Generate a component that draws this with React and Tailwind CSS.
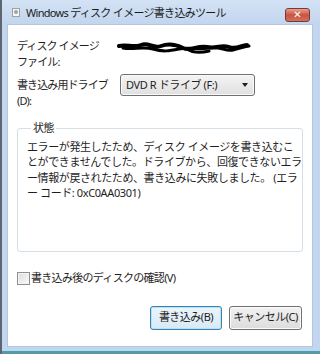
import React from 'react';

const jp = { fontFamily: '"Noto Sans", "Noto Sans CJK JP", sans-serif' };

function Scribble() {
  return (
    <svg width="134" height="14" viewBox="0 0 134 14" className="block">
      <path
        d="M2 5 C10 3 16 7 24 4 S36 8 44 5 S58 3 66 7 S80 4 90 6 S104 3 112 6 S124 4 130 4"
        fill="none" stroke="#000" strokeWidth="4" strokeLinecap="round" />
      <path
        d="M6 7 C16 9 26 5 36 8 S52 10 62 8 S80 9 92 7 S108 11 116 9 S126 6 132 5"
        fill="none" stroke="#000" strokeWidth="3" strokeLinecap="round" />
      <path d="M70 8 C76 12 84 12 92 10" fill="none" stroke="#000" strokeWidth="3" strokeLinecap="round" />
    </svg>
  );
}

function Btn({ children, primary }) {
  return (
    <button
      className={
        primary
          ? 'h-[24px] w-[72px] rounded-[3px] border border-[#3c7fb1] bg-gradient-to-b from-[#eaf6fd] to-[#d9e9f5] shadow-[inset_0_0_0_1px_#b7e2f8] text-[11px] tracking-[-0.5px] text-[#1e1e1e]'
          : 'h-[24px] w-[73px] rounded-[3px] border border-[#707070] bg-gradient-to-b from-[#f2f2f2] to-[#dcdcdc] shadow-[inset_0_0_0_1px_#fcfcfc] text-[11px] tracking-[-0.5px] text-[#1e1e1e]'
      }
      style={jp}
    >
      {children}
    </button>
  );
}

export default function App() {
  return (
    <div className="w-[320px] h-[354px] flex flex-col bg-[#c3d6ef] border-l-2 border-l-[#5d6670] overflow-hidden" style={jp}>
      {/* title bar */}
      <div className="h-[24px] flex items-center bg-gradient-to-b from-[#d3e2f4] to-[#c3d6ef] relative">
        <div className="ml-[10px] w-[8px] h-[9px] bg-[#f4f4f4] border border-[#a0a0a0] flex items-center justify-center">
          <div className="w-[4px] h-[4px] rounded-full bg-[#9aa4ae]" />
        </div>
        <span className="ml-[6px] text-[11px] tracking-[-0.7px] text-[#1b1b1b] leading-none">
          Windows ディスク イメージ書き込みツール
        </span>
        <div className="absolute left-[283px] top-[8px] w-[25px] h-[14px] rounded-[3px] border border-[#7a3a33] bg-gradient-to-b from-[#e8a092] via-[#c8533f] to-[#d0715f] flex items-center justify-center">
          <span className="text-white text-[10px] font-bold leading-none" style={{ fontFamily: '"DejaVu Sans", sans-serif' }}>✕</span>
        </div>
      </div>

      {/* client */}
      <div className="ml-[5px] w-[306px] h-[323px] bg-white border border-[#b5c6dc] flex flex-col text-[11px] tracking-[-0.4px] text-[#1e1e1e]">
        <div className="flex mt-[13px] ml-[9px]">
          <div className="w-[102px] leading-[16px] tracking-[-0.9px]">
            ディスク イメージ<br />ファイル:
          </div>
          <div className="mt-[3px] -ml-[2px]">
            <Scribble />
          </div>
        </div>

        <div className="flex mt-[4px] ml-[9px]">
          <div className="w-[103px] leading-[16px] mt-[3px] tracking-[-0.9px]">
            書き込み用ドライブ<br />(D):
          </div>
          <div className="w-[135px] h-[22px] rounded-[3px] border border-[#707070] bg-gradient-to-b from-[#f4f4f4] to-[#e0e0e0] shadow-[inset_0_0_0_1px_#fafafa] flex items-center pl-[5px] pr-[6px]">
            <span className="flex-1">DVD R ドライブ (F:)</span>
            <span className="w-0 h-0 border-l-[3px] border-r-[3px] border-t-[4px] border-l-transparent border-r-transparent border-t-[#1e1e1e]" />
          </div>
        </div>

        <fieldset className="ml-[9px] mt-[13px] w-[286px] h-[130px] border border-[#d5dfe5] rounded-[3px] pl-[9px] pt-[5px]">
          <legend className="ml-[4px] px-[2px] leading-[12px]">状態</legend>
          <div className="leading-[15.4px] whitespace-nowrap">
            エラーが発生したため、ディスク イメージを書き込むこ<br />
            とができませんでした。ドライブから、回復できないエラ<br />
            ー情報が戻されたため、書き込みに失敗しました。 (エラ<br />
            ー コード: 0xC0AA0301)
          </div>
        </fieldset>

        <div className="flex items-center ml-[9px] mt-[18px]">
          <div className="w-[13px] h-[13px] border border-[#8e8f8f] bg-gradient-to-br from-[#dcdcdc] to-[#fbfbfb] shadow-[inset_0_0_0_1px_#f4f4f4]" />
          <span className="ml-[1px] tracking-[-0.7px]">書き込み後のディスクの確認(V)</span>
        </div>

        <div className="flex justify-end gap-[7px] mr-[10px] mt-[19px]">
          <Btn primary>書き込み(B)</Btn>
          <Btn>キャンセル(C)</Btn>
        </div>
      </div>

      <div className="flex-1" />
      <div className="h-[2px] bg-[#3aa6b4]" />
      <div className="h-[1px] bg-[#7d8a96]" />
    </div>
  );
}
